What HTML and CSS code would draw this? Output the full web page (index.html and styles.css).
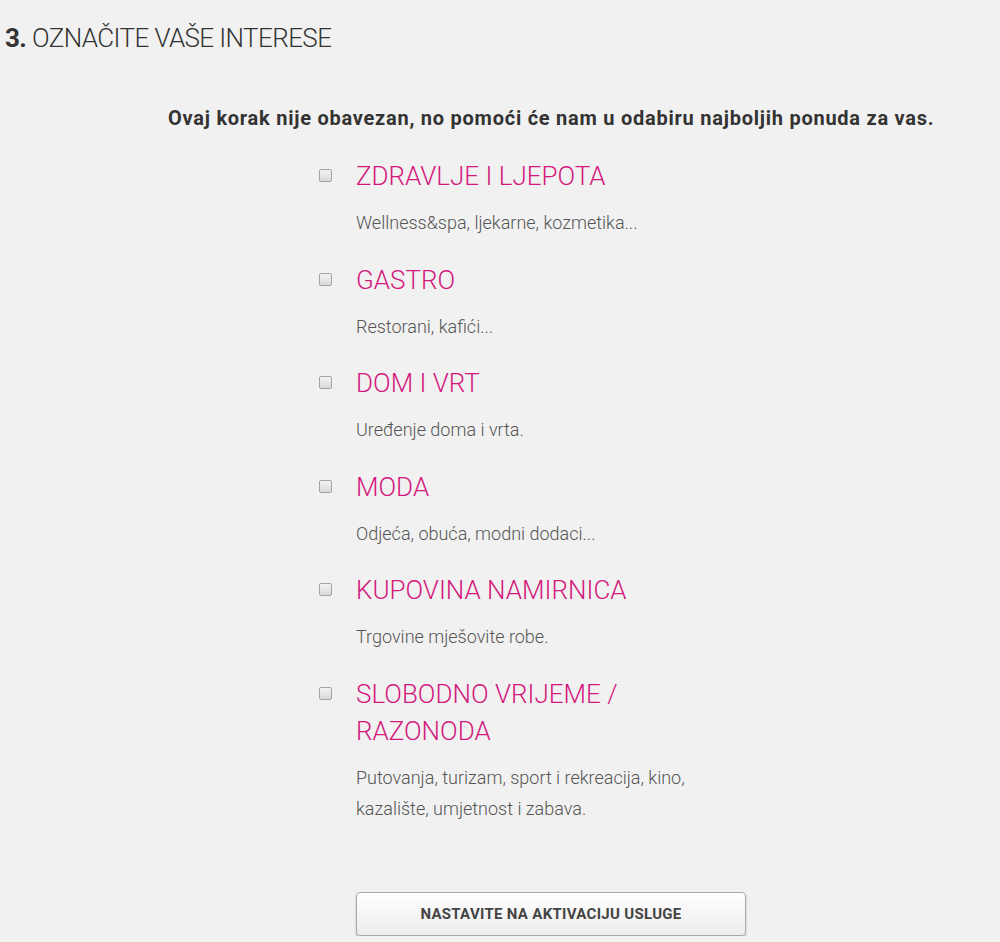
FILE: index.html
```html
<!DOCTYPE html>
<html lang="hr">
<head>
  <meta charset="UTF-8">
  <title>Označite vaše interese</title>
  <link rel="stylesheet" href="styles.css">
</head>
<body>

  <h1 class="step"><b>3.</b> OZNAČITE VAŠE INTERESE</h1>

  <p class="intro">Ovaj korak nije obavezan, no pomoći će nam u odabiru najboljih ponuda za vas.</p>

  <ul class="interests">
    <li class="interest">
      <input type="checkbox" id="i1">
      <div class="info">
        <label for="i1" class="title">ZDRAVLJE I LJEPOTA</label>
        <p class="desc">Wellness&amp;spa, ljekarne, kozmetika...</p>
      </div>
    </li>
    <li class="interest">
      <input type="checkbox" id="i2">
      <div class="info">
        <label for="i2" class="title">GASTRO</label>
        <p class="desc">Restorani, kafići...</p>
      </div>
    </li>
    <li class="interest">
      <input type="checkbox" id="i3">
      <div class="info">
        <label for="i3" class="title">DOM I VRT</label>
        <p class="desc">Uređenje doma i vrta.</p>
      </div>
    </li>
    <li class="interest">
      <input type="checkbox" id="i4">
      <div class="info">
        <label for="i4" class="title">MODA</label>
        <p class="desc">Odjeća, obuća, modni dodaci...</p>
      </div>
    </li>
    <li class="interest">
      <input type="checkbox" id="i5">
      <div class="info">
        <label for="i5" class="title">KUPOVINA NAMIRNICA</label>
        <p class="desc">Trgovine mješovite robe.</p>
      </div>
    </li>
    <li class="interest">
      <input type="checkbox" id="i6">
      <div class="info">
        <label for="i6" class="title">SLOBODNO VRIJEME / RAZONODA</label>
        <p class="desc">Putovanja, turizam, sport i rekreacija, kino, kazalište, umjetnost i zabava.</p>
      </div>
    </li>
  </ul>

  <div class="actions">
    <button class="next">NASTAVITE NA AKTIVACIJU USLUGE</button>
  </div>

</body>
</html>
```

FILE: styles.css
```css
body {
  margin: 0;
  background: #f1f1f1;
  font-family: Roboto, "Liberation Sans", sans-serif;
  color: #333;
}

.step {
  margin: 0;
  padding: 21px 0 0 5px;
  font-size: 26px;
  font-weight: 300;
  line-height: 34px;
  letter-spacing: -0.6px;
  color: #333;
}

.step b {
  font-weight: 700;
}

.intro {
  margin: 51px 0 0 168px;
  font-size: 20px;
  font-weight: 700;
  line-height: 24px;
  letter-spacing: 0.75px;
  color: #333;
}

.interests {
  list-style: none;
  margin: 28px 0 0 319px;
  padding: 0;
}

.interest {
  display: flex;
  align-items: flex-start;
  margin-bottom: 23.5px;
}

.interest input {
  appearance: none;
  width: 13px;
  height: 13px;
  margin: 11px 24px 0 0;
  border: 1px solid #a4a4a4;
  border-radius: 2px;
  background: linear-gradient(#f4f4f4, #d9d9d9);
  flex-shrink: 0;
}

.info {
  width: 360px;
}

.title {
  display: block;
  font-size: 26px;
  font-weight: 300;
  line-height: 37px;
  color: #d3197d;
}

.desc {
  margin: 12px 0 0;
  font-size: 18px;
  font-weight: 300;
  line-height: 31px;
  color: #555;
}

.actions {
  margin: 68px 0 0 356px;
}

.next {
  width: 390px;
  height: 44px;
  border: 1px solid #a9a9a9;
  border-radius: 4px;
  background: linear-gradient(#ffffff, #ececec);
  box-shadow: 0 2px 2px rgba(0, 0, 0, 0.25);
  font-family: Roboto, "Liberation Sans", sans-serif;
  font-size: 15px;
  font-weight: 700;
  letter-spacing: 0.3px;
  color: #444;
}
```
